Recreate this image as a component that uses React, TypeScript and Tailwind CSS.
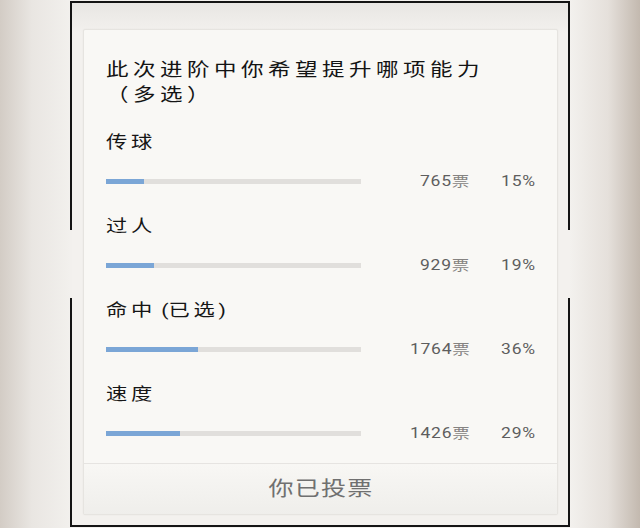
import React from 'react'

type Option = { label: string; note?: string; votes: number; pct: number }

const options: Option[] = [
  { label: '传球', votes: 765, pct: 15 },
  { label: '过人', votes: 929, pct: 19 },
  { label: '命中', note: '已选', votes: 1764, pct: 36 },
  { label: '速度', votes: 1426, pct: 29 },
]

const cjk = "font-['Roboto','Noto_Sans_CJK_SC',sans-serif]"

// the screenshot is a little wide, so text is stretched sideways a bit
function SideLine() {
  return (
    <div className="flex w-[2px] flex-col">
      <div className="h-[227px] bg-[#141414]" />
      <div className="h-[68px]" />
      <div className="flex-1 bg-[#141414]" />
    </div>
  )
}

function OptionRow({ option }: { option: Option }) {
  return (
    <div className="flex flex-col">
      <div className="h-[24px] origin-left scale-x-[1.25] whitespace-nowrap text-[17px] leading-[24px] tracking-[3px] text-[#161616]">
        {option.label}
        {option.note && (
          <>
            <span className="tracking-normal"> (</span>
            {option.note}
            <span className="tracking-normal">)</span>
          </>
        )}
      </div>
      <div className="mt-[17px] flex h-[20px] items-center">
        <div className="h-[5px] w-[255px] bg-[#e1dfdc]">
          <div className="h-full bg-[#7ba6d6]" style={{ width: `${option.pct}%` }} />
        </div>
        <div className="w-[109px] text-right">
          <span className="inline-block origin-right scale-x-[1.25] text-[14px] leading-[20px] tracking-[0.6px] text-[#5e5e5e]">
            {option.votes}
            <span className="text-[#858381]">票</span>
          </span>
        </div>
        <div className="w-[66px] text-right">
          <span className="inline-block origin-right scale-x-[1.25] text-[14px] leading-[20px] tracking-[0.6px] text-[#5e5e5e]">
            {option.pct}%
          </span>
        </div>
      </div>
    </div>
  )
}

export default function App() {
  return (
    <div
      className={`flex h-[528px] w-full justify-center overflow-hidden bg-[linear-gradient(to_right,#d3ccc5,#e9e6e2_5%,#f2f0ed_11%,#f3f1ee_89%,#e5e0db_95%,#c3b9af)] pt-[1px] ${cjk}`}
    >
      <div className="flex h-[526px] w-[500px] border-y-2 border-[#141414]">
        <SideLine />
        <div className="flex flex-1 flex-col bg-[linear-gradient(to_bottom,#e8e6e3,#f3f1ee_30px)] pb-[10px] pl-[11px] pr-[10px] pt-[26px]">
          <div className="flex flex-1 flex-col rounded-[2px] border border-[#e6e4e0] bg-[#f9f8f5] shadow-[0_0_2px_rgba(0,0,0,0.05)]">
            <div className="flex flex-col pl-[22px] pt-[27px]">
              <div className="origin-left scale-x-[1.25] whitespace-nowrap text-[18px] leading-[25px] tracking-[3.6px] text-[#141414]">
                此次进阶中你希望提升哪项能力
                <br />
                （多选）
              </div>
              <div className="mt-[23px] flex flex-col gap-[23px]">
                {options.map((option) => (
                  <OptionRow key={option.label} option={option} />
                ))}
              </div>
            </div>
            <div className="mt-[20px] flex flex-1 items-center justify-center border-t border-[#e6e4e1] bg-[linear-gradient(to_bottom,#f8f7f4,#efeeeb)]">
              <span className="inline-block scale-x-[1.25] text-[20px] tracking-[1px] text-[#707070]">你已投票</span>
            </div>
          </div>
        </div>
        <SideLine />
      </div>
    </div>
  )
}
